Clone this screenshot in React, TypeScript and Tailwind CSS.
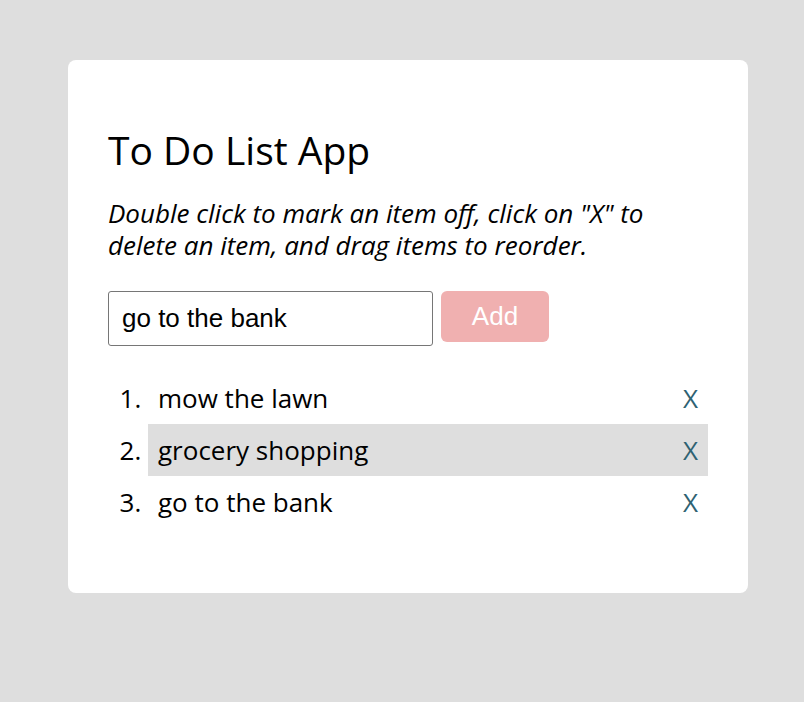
import React, { useState } from 'react';

const App = () => {
  const [items] = useState(['mow the lawn', 'grocery shopping', 'go to the bank']);
  const [text, setText] = useState('go to the bank');

  return (
    <div className="min-h-[702px] bg-[#dedede] pt-[60px] font-['Open_Sans',sans-serif]">
      <div className="ml-[68px] w-[680px] rounded-lg bg-white px-10 pt-[66px] pb-[65px]">
        <h1 className="text-[39px] leading-[48px] text-black">To Do List App</h1>
        <p className="mt-[23px] text-[26px] italic leading-[32px] text-black">
          Double click to mark an item off, click on "X" to delete an item, and drag items to reorder.
        </p>

        {/* add form */}
        <div className="mt-[30px] flex items-start gap-2">
          <input
            value={text}
            onChange={(e) => setText(e.target.value)}
            className="h-[55px] w-[325px] rounded-[3px] border border-[#767676] px-[13px] font-['Liberation_Sans',sans-serif] text-[26px] text-black outline-none"
          />
          <button className="h-[51px] w-[108px] rounded-md bg-[#f0b0b0] font-['Liberation_Sans',sans-serif] text-[26px] text-white">
            Add
          </button>
        </div>

        <ol className="mt-[26px] list-decimal pl-10 text-[26px] text-black">
          {items.map((item, i) => (
            <li
              key={item}
              className={`h-[52px] pl-[10px] leading-[52px] ${i === 1 ? 'bg-[#dedede]' : ''}`}
            >
              <div className="flex items-center justify-between pr-[10px]">
                <span>{item}</span>
                <span className="cursor-pointer text-[#2e6272]">X</span>
              </div>
            </li>
          ))}
        </ol>
      </div>
    </div>
  );
};

export default App;
